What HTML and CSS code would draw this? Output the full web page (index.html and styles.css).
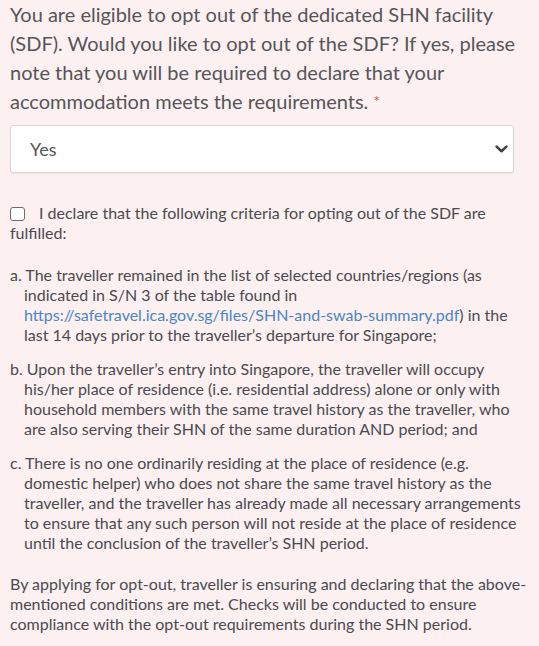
FILE: index.html
```html
<!DOCTYPE html>
<html lang="en">
<head>
<meta charset="utf-8">
<title>SDF opt-out</title>
<link rel="stylesheet" href="styles.css">
</head>
<body>
<div class="form">
  <p class="question">You are eligible to opt out of the dedicated SHN facility<br>(SDF). Would you like to opt out of the SDF? If yes, please<br>note that you will be required to declare that your<br>accommodation meets the requirements. <span class="req">*</span></p>
  <div class="select">
    <span class="select-value">Yes</span>
    <svg class="chevron" width="13" height="8" viewBox="0 0 13 8"><polyline points="1.6,1.6 6.5,6.2 11.4,1.6" fill="none" stroke="#444" stroke-width="2.6" stroke-linecap="round" stroke-linejoin="round"/></svg>
  </div>
  <p class="declare"><span class="checkbox"></span>I declare that the following criteria for opting out of the SDF are<br>fulfilled:</p>
  <ol class="criteria">
    <li>a. The traveller remained in the list of selected countries/regions (as<br>indicated in S/N 3 of the table found in<br><a class="link" href="#">https://safetravel.ica.gov.sg/files/SHN-and-swab-summary.pdf</a>) in the<br>last 14 days prior to the traveller’s departure for Singapore;</li>
    <li>b. Upon the traveller’s entry into Singapore, the traveller will occupy<br>his/her place of residence (i.e. residential address) alone or only with<br>household members with the same travel history as the traveller, who<br>are also serving their SHN of the same duration AND period; and</li>
    <li>c. There is no one ordinarily residing at the place of residence (e.g.<br>domestic helper) who does not share the same travel history as the<br>traveller, and the traveller has already made all necessary arrangements<br>to ensure that any such person will not reside at the place of residence<br>until the conclusion of the traveller’s SHN period.</li>
  </ol>
  <p class="note">By applying for opt-out, traveller is ensuring and declaring that the above-<br>mentioned conditions are met. Checks will be conducted to ensure<br>compliance with the opt-out requirements during the SHN period.</p>
</div>
</body>
</html>
```

FILE: styles.css
```css
html, body {
  margin: 0;
  padding: 0;
  background: #fcf1f0;
}
body {
  font-family: Lato, "Open Sans", sans-serif;
  color: #4a4a50;
}
.form {
  padding: 0 0 0 10px;
}
.question {
  margin: 0;
  font-size: 20px;
  line-height: 29px;
  color: #55555a;
  white-space: nowrap;
}
.req {
  color: #d9534f;
  font-size: 15px;
  vertical-align: 2px;
}
.select {
  margin-top: 9px;
  width: 504px;
  height: 48px;
  box-sizing: border-box;
  background: #fff;
  border: 1px solid #dcd8d8;
  border-radius: 3px;
  box-shadow: 0 1px 1px rgba(0,0,0,0.06);
  display: flex;
  align-items: center;
  justify-content: space-between;
  padding: 0 5px 0 19px;
}
.select-value {
  font-size: 18px;
  color: #555;
}
.chevron {
  display: block;
}
.declare {
  margin: 30px 0 0;
  font-size: 16px;
  line-height: 20px;
  white-space: nowrap;
}
.checkbox {
  display: inline-block;
  width: 15px;
  height: 14px;
  box-sizing: border-box;
  border: 1.5px solid #6a6a6a;
  border-radius: 3px;
  background: #fff;
  vertical-align: -2px;
  margin-right: 14px;
}
.criteria {
  list-style: none;
  margin: 22px 0 0;
  padding: 0;
  font-size: 16px;
  line-height: 20px;
}
.criteria li {
  padding-left: 14px;
  text-indent: -14px;
  margin-bottom: 14px;
  white-space: nowrap;
}
.criteria li:last-child {
  margin-bottom: 0;
}
.link {
  color: #4a86c0;
  text-decoration: none;
}
.note {
  margin: 21px 0 0;
  font-size: 16px;
  line-height: 20px;
  white-space: nowrap;
}
```
